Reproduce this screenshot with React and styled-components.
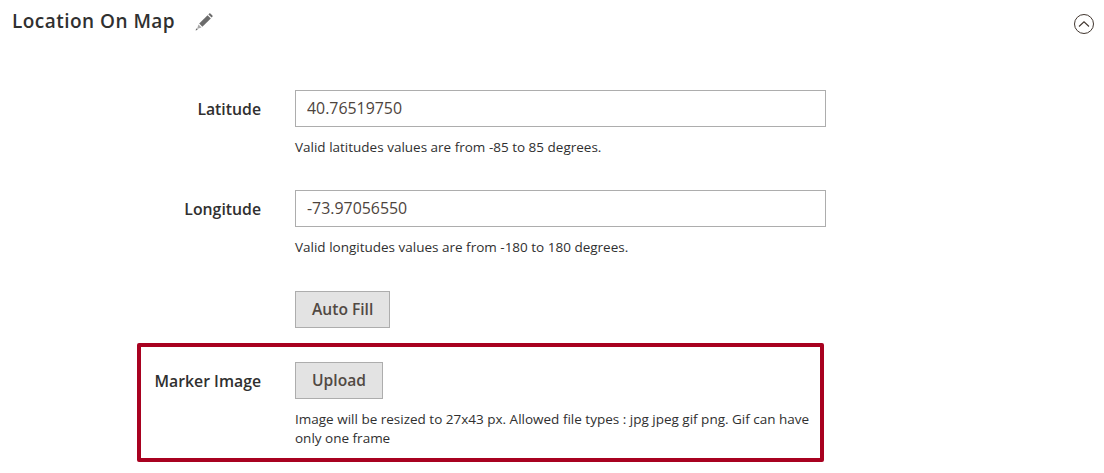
import styled, { createGlobalStyle } from "styled-components";

const GlobalStyle = createGlobalStyle`
  html, body {
    margin: 0;
    background: #fff;
    color: #41362f;
    font-family: "Open Sans", "Liberation Sans", sans-serif;
  }
  * {
    box-sizing: border-box;
  }
`;

const Page = styled.div`
  width: 1104px;
  height: 473px;
  overflow: hidden;
  padding: 9px 10px 0 12px;
`;

const Header = styled.header`
  display: flex;
  align-items: center;
  height: 25px;
`;

const Title = styled.h2`
  margin: 0;
  font-size: 19px;
  font-weight: 600;
  line-height: 25px;
  letter-spacing: 0.47px;
  color: #303030;
`;

const EditIcon = styled.svg`
  margin-left: 20px;
  width: 18px;
  height: 18px;
`;

const Collapse = styled.button`
  margin-left: auto;
  margin-top: 4px;
  width: 20px;
  height: 20px;
  padding: 0;
  border: 1px solid #41362f;
  border-radius: 50%;
  background: none;
  display: flex;
  align-items: center;
  justify-content: center;
`;

const Form = styled.form`
  margin: 56px 0 0 125px;
  display: flex;
  flex-direction: column;
`;

const Row = styled.div`
  display: grid;
  grid-template-columns: 124px 531px;
  column-gap: 34px;
  margin-bottom: ${(p) => p.$gap}px;
`;

const FramedRow = styled.div`
  display: grid;
  grid-template-columns: 120px 515px;
  column-gap: 34px;
  width: 687px;
  height: 119px;
  padding-top: 15px;
  border: 4px solid #a80120;
  border-radius: 2px;
`;

const Label = styled.label`
  padding-top: 1px;
  text-align: right;
  font-size: 15.8px;
  font-weight: 600;
  line-height: 37px;
  color: #303030;
`;

const Field = styled.div`
  display: flex;
  flex-direction: column;
  align-items: flex-start;
`;

const Input = styled.input`
  width: 100%;
  height: 37px;
  padding: 0 11px 1px;
  border: 1px solid #adadad;
  border-radius: 0;
  outline: none;
  font: 400 15.9px "Open Sans", sans-serif;
  color: #4d443d;
  background: #fff;
`;

const Note = styled.p`
  margin: 11px 0 0;
  font-size: 13.5px;
  line-height: 19px;
  color: #303030;
`;

const Button = styled.button`
  height: 37px;
  padding: 0 16px 2px;
  border: 1px solid #adadad;
  border-radius: 0;
  background: #e3e3e3;
  font: 600 15.6px "Open Sans", sans-serif;
  color: #514943;
`;

export default function App() {
  return (
    <Page>
      <GlobalStyle />
      <Header>
        <Title>Location On Map</Title>
        <EditIcon viewBox="0 0 18 18" aria-hidden="true">
          <path d="M4.2 10.6 L12.6 2.2 L15.8 5.4 L7.4 13.8 Z" fill="#6b6b6b" />
          <path d="M13.4 1.4 L14.2 0.6 Q14.8 0 15.4 0.6 L17.4 2.6 Q18 3.2 17.4 3.8 L16.6 4.6 Z" fill="#6b6b6b" />
          <path d="M3.5 11.5 L6.5 14.5 L2 16 Z" fill="#a8a8a8" />
          <path d="M1.2 15.2 L2.8 16.8 L0.6 17.4 Z" fill="#6b6b6b" />
        </EditIcon>
        <Collapse type="button" aria-label="Collapse">
          <svg width="12" height="8" viewBox="0 0 12 8" fill="none">
            <path d="M1 6.5 L6 1.8 L11 6.5" stroke="#41362f" strokeWidth="1.1" />
          </svg>
        </Collapse>
      </Header>
      <Form>
        <Row $gap={33}>
          <Label>Latitude</Label>
          <Field>
            <Input defaultValue="40.76519750" />
            <Note>Valid latitudes values are from -85 to 85 degrees.</Note>
          </Field>
        </Row>
        <Row $gap={34}>
          <Label>Longitude</Label>
          <Field>
            <Input defaultValue="-73.97056550" />
            <Note>Valid longitudes values are from -180 to 180 degrees.</Note>
          </Field>
        </Row>
        <Row $gap={15}>
          <span />
          <Field>
            <Button type="button">Auto Fill</Button>
          </Field>
        </Row>
        <FramedRow>
          <Label>Marker Image</Label>
          <Field>
            <Button type="button">Upload</Button>
            <Note>
              Image will be resized to 27x43 px. Allowed file types : jpg jpeg gif png. Gif can have only one frame
            </Note>
          </Field>
        </FramedRow>
      </Form>
    </Page>
  );
}
